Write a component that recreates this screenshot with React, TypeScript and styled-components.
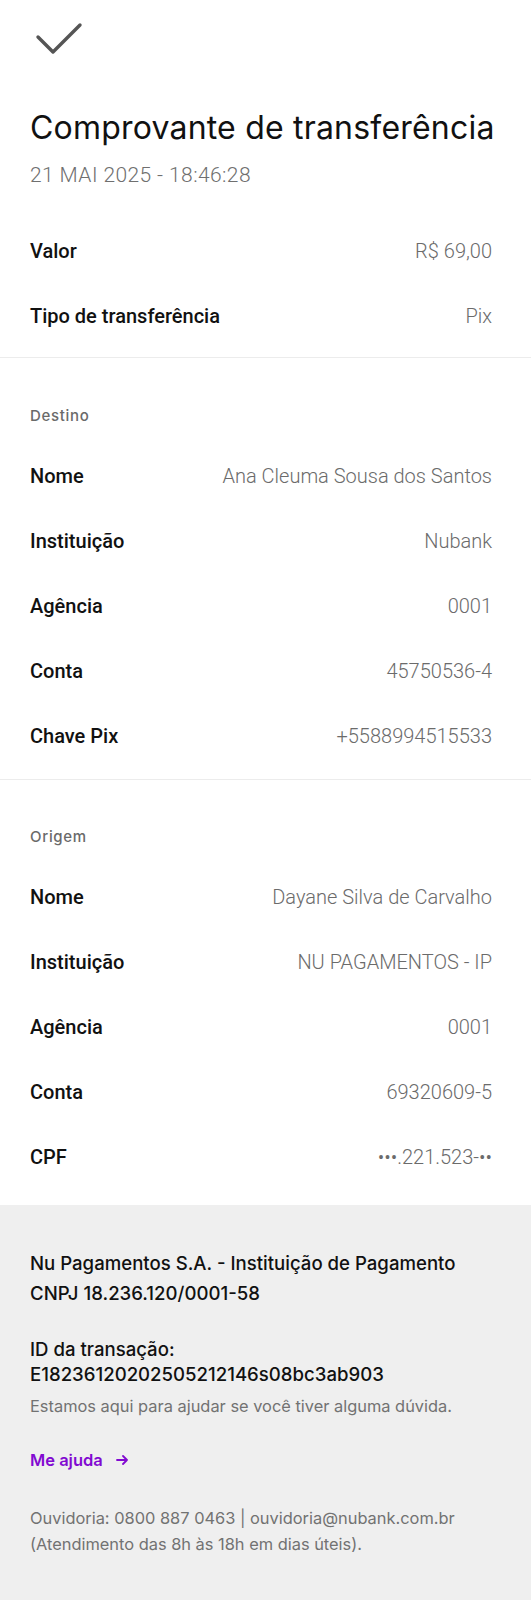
import React from "react";
import styled, { createGlobalStyle } from "styled-components";

const Global = createGlobalStyle`
  html, body { margin: 0; padding: 0; background: #ffffff; }
  body { font-family: Roboto, "Noto Sans", Arial, sans-serif; -webkit-font-smoothing: antialiased; }
`;

const Page = styled.div`
  width: 531px;
  min-height: 1600px;
  display: flex;
  flex-direction: column;
  background: #ffffff;
`;

const Header = styled.header`
  display: flex;
  flex-direction: column;
  padding: 22px 39px 0 30px;
`;

const CheckIcon = styled.svg`
  display: block;
  width: 56px;
  height: 34px;
  color: #555555;
`;

const Title = styled.h1`
  margin: 52px 0 0;
  font-family: Inter, "Noto Sans", sans-serif;
  font-size: 32px;
  line-height: 40px;
  font-weight: 400;
  color: #111111;
  letter-spacing: 0.2px;
  white-space: nowrap;
`;

const DateText = styled.div`
  margin-top: 14px;
  font-size: 21px;
  line-height: 26px;
  font-weight: 300;
  letter-spacing: 0.4px;
  color: #6f6f6f;
`;

const Section = styled.section<{ $padTop: number; $padBottom: number }>`
  display: flex;
  flex-direction: column;
  padding: ${(p) => p.$padTop}px 39px ${(p) => p.$padBottom}px 30px;
`;

const Divider = styled.hr`
  margin: 0;
  border: 0;
  height: 1px;
  background: #ececec;
`;

const SectionLabel = styled.div`
  height: 28px;
  display: flex;
  align-items: center;
  margin-bottom: 14px;
  font-family: Inter, "Noto Sans", sans-serif;
  font-size: 15px;
  font-weight: 500;
  letter-spacing: 0.7px;
  color: #6a6a6a;
`;

const Row = styled.div`
  height: 65px;
  display: flex;
  align-items: center;
  justify-content: space-between;
  gap: 16px;
`;

const Label = styled.span`
  font-size: 20px;
  font-weight: 500;
  color: #111111;
  white-space: nowrap;
`;

const Value = styled.span`
  font-size: 20px;
  font-weight: 300;
  color: #6b6b6b;
  text-align: right;
  white-space: nowrap;
`;

const Footer = styled.footer`
  flex: 1;
  background: #efefef;
  padding: 43px 30px 40px 30px;
  display: flex;
  flex-direction: column;
  font-family: Inter, "Noto Sans", sans-serif;
`;

const Strong = styled.div<{ $lh: number }>`
  font-size: 18.6px;
  line-height: ${(p) => p.$lh}px;
  font-weight: 500;
  color: #111111;
  white-space: nowrap;
`;

const Block = styled.div<{ $mt: number }>`
  margin-top: ${(p) => p.$mt}px;
  display: flex;
  flex-direction: column;
`;

const Muted = styled.div<{ $mt: number; $lh: number }>`
  margin-top: ${(p) => p.$mt}px;
  font-size: 16.4px;
  line-height: ${(p) => p.$lh}px;
  font-weight: 400;
  color: #727272;
  white-space: nowrap;
`;

const HelpLink = styled.a`
  margin-top: 29px;
  align-self: flex-start;
  display: inline-flex;
  align-items: center;
  gap: 13px;
  height: 24px;
  font-size: 16.5px;
  font-weight: 600;
  color: #820ad1;
  text-decoration: none;
`;

const ArrowIcon = styled.svg`
  display: block;
  width: 12px;
  height: 10px;
`;

type Item = [string, string];

const topRows: Item[] = [
  ["Valor", "R$ 69,00"],
  ["Tipo de transferência", "Pix"],
];

const destino: Item[] = [
  ["Nome", "Ana Cleuma Sousa dos Santos"],
  ["Instituição", "Nubank"],
  ["Agência", "0001"],
  ["Conta", "45750536-4"],
  ["Chave Pix", "+5588994515533"],
];

const origem: Item[] = [
  ["Nome", "Dayane Silva de Carvalho"],
  ["Instituição", "NU PAGAMENTOS - IP"],
  ["Agência", "0001"],
  ["Conta", "69320609-5"],
  ["CPF", "•••.221.523-••"],
];

const Rows = ({ items }: { items: Item[] }) => (
  <>
    {items.map(([l, v]) => (
      <Row key={l}>
        <Label>{l}</Label>
        <Value>{v}</Value>
      </Row>
    ))}
  </>
);

export default function App() {
  return (
    <Page>
      <Global />
      <Header>
        <CheckIcon viewBox="0 0 56 34" fill="none">
          <path
            d="M8 15 L23 30 L50 3"
            stroke="currentColor"
            strokeWidth="3.4"
            strokeLinecap="round"
            strokeLinejoin="round"
          />
        </CheckIcon>
        <Title>Comprovante de transferência</Title>
        <DateText>21 MAI 2025 - 18:46:28</DateText>
      </Header>
      <Section $padTop={30} $padBottom={9}>
        <Rows items={topRows} />
      </Section>
      <Divider />
      <Section $padTop={43} $padBottom={11}>
        <SectionLabel>Destino</SectionLabel>
        <Rows items={destino} />
      </Section>
      <Divider />
      <Section $padTop={42} $padBottom={16}>
        <SectionLabel>Origem</SectionLabel>
        <Rows items={origem} />
      </Section>
      <Footer>
        <Strong $lh={30}>Nu Pagamentos S.A. - Instituição de Pagamento</Strong>
        <Strong $lh={30}>CNPJ 18.236.120/0001-58</Strong>
        <Block $mt={29}>
          <Strong $lh={25}>ID da transação:</Strong>
          <Strong $lh={25}>E18236120202505212146s08bc3ab903</Strong>
        </Block>
        <Muted $mt={7} $lh={25}>
          Estamos aqui para ajudar se você tiver alguma dúvida.
        </Muted>
        <HelpLink href="#">
          Me ajuda
          <ArrowIcon viewBox="0 0 12 10" fill="none" aria-hidden>
            <path
              d="M1 5 H11 M7 1 L11 5 L7 9"
              stroke="currentColor"
              strokeWidth="1.8"
              strokeLinecap="round"
              strokeLinejoin="round"
            />
          </ArrowIcon>
        </HelpLink>
        <Muted $mt={33} $lh={26}>
          Ouvidoria: 0800 887 0463 | ouvidoria@nubank.com.br
          <br />
          (Atendimento das 8h às 18h em dias úteis).
        </Muted>
      </Footer>
    </Page>
  );
}
